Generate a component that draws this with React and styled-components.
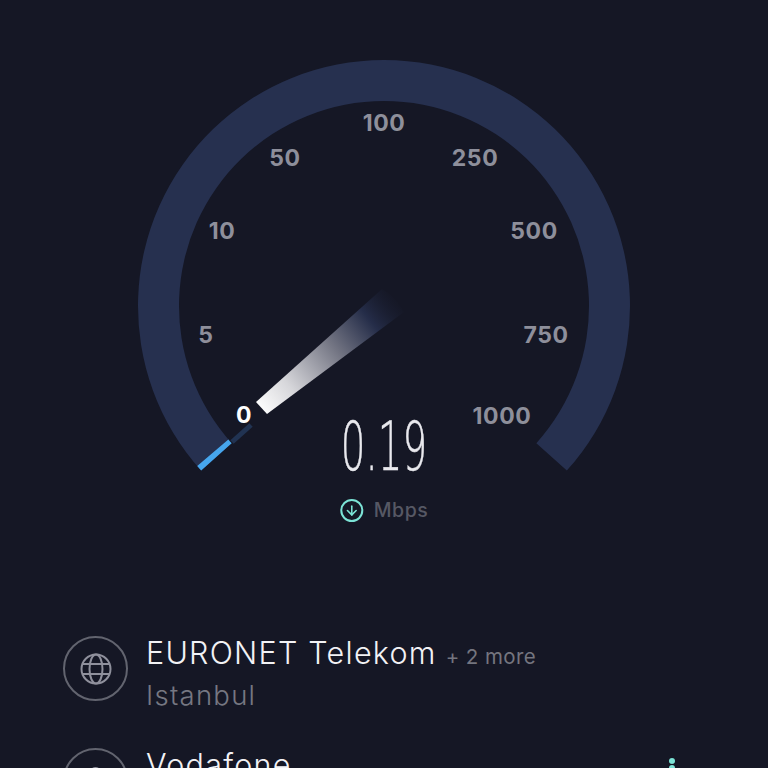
import React from "react";
import styled, { createGlobalStyle } from "styled-components";
import { User, ArrowDown } from "lucide-react";

const Global = createGlobalStyle`
  html, body { margin: 0; padding: 0; background: #151725; }
`;

const Screen = styled.div`
  width: 768px;
  height: 768px;
  overflow: hidden;
  background: #151725;
  font-family: Inter, "Noto Sans", sans-serif;
`;

const Stage = styled.section`
  position: relative;
  height: 635px;
`;

const Dial = styled.svg`
  display: block;
`;

const Tick = styled.span`
  position: absolute;
  left: ${(p) => p.$x}px;
  top: ${(p) => p.$y}px;
  transform: translate(-50%, -50%);
  font-size: 23px;
  font-weight: 700;
  letter-spacing: 0.6px;
  line-height: 1;
  color: ${(p) => (p.$active ? "#ffffff" : "#8e8f9b")};
`;

const Readout = styled.div`
  position: absolute;
  left: 384px;
  top: 412px;
  transform: translateX(-50%);
  display: flex;
  flex-direction: column;
  align-items: center;
`;

const Speed = styled.div`
  font-family: "DejaVu Sans", sans-serif;
  font-weight: 200;
  font-size: 68px;
  line-height: 70px;
  color: #e9e9ee;
  -webkit-text-stroke: 0.5px #e9e9ee;
  transform: scaleX(0.57);
`;

const UnitRow = styled.div`
  display: flex;
  align-items: center;
  gap: 11px;
  margin-top: 16px;
`;

const UnitIcon = styled.span`
  width: 19px;
  height: 19px;
  border: 2.5px solid #7ce3d6;
  border-radius: 50%;
  display: flex;
  align-items: center;
  justify-content: center;
  color: #7ce3d6;
`;

const Unit = styled.span`
  font-size: 19.5px;
  font-weight: 500;
  letter-spacing: 0.5px;
  color: #565864;
`;

const List = styled.section`
  display: flex;
  flex-direction: column;
  gap: 45px;
  padding: 0 93px 0 63px;
`;

const Row = styled.div`
  display: flex;
  align-items: flex-start;
  gap: 18px;
  height: 67px;
`;

const IconRing = styled.div`
  flex: none;
  width: 61px;
  height: 61px;
  margin-top: 1px;
  border: 2.5px solid #62646f;
  border-radius: 50%;
  display: flex;
  align-items: center;
  justify-content: center;
  color: #8f909c;
`;

const Globe = styled.svg`
  display: block;
`;

const Info = styled.div`
  display: flex;
  flex-direction: column;
  flex: 1;
`;

const TitleLine = styled.div`
  display: flex;
  align-items: baseline;
  gap: 9px;
  height: 36px;
`;

const Name = styled.span`
  font-size: 30.5px;
  font-weight: 300;
  line-height: 36px;
  letter-spacing: 1.25px;
  color: #f2f2f5;
  white-space: nowrap;
`;

const More = styled.span`
  font-size: 20.5px;
  font-weight: 400;
  letter-spacing: 0.4px;
  color: #74757f;
  white-space: nowrap;
`;

const Place = styled.span`
  font-size: 27.5px;
  font-weight: 300;
  line-height: 36px;
  margin-top: 6px;
  letter-spacing: 1.25px;
  color: #767782;
`;

const Kebab = styled.div`
  flex: none;
  display: flex;
  flex-direction: column;
  gap: 1px;
  margin-top: 11px;
`;

const Dot = styled.i`
  display: block;
  width: 6px;
  height: 6px;
  border-radius: 50%;
  background: #7ce3d6;
`;

const ticks = [
  ["0", 244, 415, true],
  ["5", 206, 335],
  ["10", 222, 231],
  ["50", 285, 158],
  ["100", 384, 123],
  ["250", 475, 158],
  ["500", 534, 231],
  ["750", 546, 335],
  ["1000", 502, 416],
];

// Gauge geometry: the centre and radii were measured from the dial.
const CX = 384;
const CY = 306;
const pt = (r, deg) => {
  const a = (deg * Math.PI) / 180;
  return [CX + r * Math.cos(a), CY + r * Math.sin(a)];
};
const sector = (a0, a1, r0, r1) => {
  const [x0, y0] = pt(r1, a0);
  const [x1, y1] = pt(r1, a1);
  const [x2, y2] = pt(r0, a1);
  const [x3, y3] = pt(r0, a0);
  const large = Math.abs(a1 - a0) > 180 ? 1 : 0;
  return `M${x0} ${y0}A${r1} ${r1} 0 ${large} 1 ${x1} ${y1}L${x2} ${y2}A${r0} ${r0} 0 ${large} 0 ${x3} ${y3}Z`;
};

const START = 138;
const END = 402;

export default function App() {
  return (
    <Screen>
      <Global />
      <Stage>
        <Dial width="768" height="635" viewBox="0 0 768 635">
          <defs>
            <linearGradient id="needle" gradientUnits="userSpaceOnUse" x1="258" y1="410" x2="398" y2="298">
              <stop offset="0" stopColor="#ffffff" />
              <stop offset="0.22" stopColor="#d6d6da" />
              <stop offset="0.55" stopColor="#737583" />
              <stop offset="0.8" stopColor="#252d49" />
              <stop offset="1" stopColor="#1a1f33" stopOpacity="0" />
            </linearGradient>
          </defs>
          <path d={sector(START, END, 205, 246)} fill="#26304f" />
          <path d={sector(START, START + 1.4, 205, 246)} fill="#46a6ee" />
          <path d="M232 442L251 425" stroke="#213352" strokeWidth="5" />
          <path d="M256 402L382 289Q395 296 404 312L267 414Z" fill="url(#needle)" />
        </Dial>
        {ticks.map(([label, x, y, active]) => (
          <Tick key={label} $x={x} $y={y} $active={active}>
            {label}
          </Tick>
        ))}
        <Readout>
          <Speed>0.19</Speed>
          <UnitRow>
            <UnitIcon>
              <ArrowDown size={15} strokeWidth={2.5} />
            </UnitIcon>
            <Unit>Mbps</Unit>
          </UnitRow>
        </Readout>
      </Stage>
      <List>
        <Row>
          <IconRing>
            <Globe width="32" height="32" viewBox="0 0 32 32" fill="none" stroke="currentColor" strokeWidth="2">
              <circle cx="16" cy="16" r="14.5" />
              <ellipse cx="16" cy="16" rx="6.5" ry="14.5" />
              <path d="M3 11h26M3 21h26" />
            </Globe>
          </IconRing>
          <Info>
            <TitleLine>
              <Name>EURONET Telekom</Name>
              <More>+ 2 more</More>
            </TitleLine>
            <Place>Istanbul</Place>
          </Info>
        </Row>
        <Row>
          <IconRing>
            <User size={33} strokeWidth={1.5} />
          </IconRing>
          <Info>
            <TitleLine>
              <Name>Vodafone</Name>
            </TitleLine>
          </Info>
          <Kebab>
            <Dot />
            <Dot />
            <Dot />
          </Kebab>
        </Row>
      </List>
    </Screen>
  );
}
